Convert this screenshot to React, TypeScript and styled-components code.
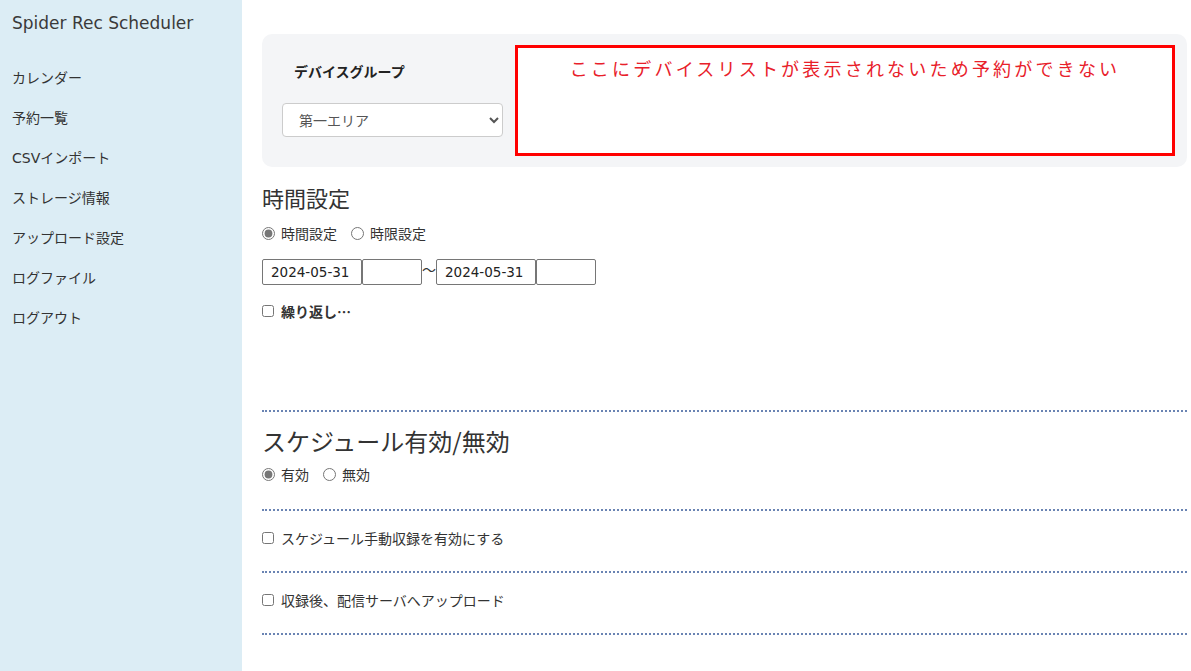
import React from "react";
import styled, { createGlobalStyle } from "styled-components";

const Global = createGlobalStyle`
  html, body { margin: 0; padding: 0; background: #fff; }
  body {
    font-family: "DejaVu Sans", "Noto Sans CJK JP", sans-serif;
    color: #333;
    font-size: 14px;
  }
  * { box-sizing: border-box; }
`;

const Layout = styled.div`
  display: flex;
  width: 1191px;
  min-height: 671px;
`;

const Sidebar = styled.aside`
  width: 242px;
  flex-shrink: 0;
  background: #dcedf5;
  padding: 10px 12px;
`;

const Brand = styled.div`
  font-size: 17px;
  color: #3a3a3a;
  line-height: 26px;
  margin-bottom: 22px;
`;

const NavList = styled.nav`
  display: flex;
  flex-direction: column;
`;

const NavItem = styled.a`
  display: block;
  font-size: 14px;
  line-height: 40px;
  color: #333;
  text-decoration: none;
`;

const Main = styled.main`
  flex: 1;
  padding: 34px 4px 0 20px;
`;

const Panel = styled.div`
  display: flex;
  background: #f4f5f7;
  border-radius: 10px;
  height: 133px;
  padding: 11px 12px 11px 20px;
  gap: 12px;
`;

const GroupCol = styled.div`
  display: flex;
  flex-direction: column;
  width: 221px;
  padding-top: 16px;
`;

const GroupLabel = styled.div`
  font-family: "Noto Sans CJK JP", sans-serif;
  font-weight: bold;
  font-size: 14px;
  line-height: 20px;
  padding-left: 12px;
  color: #222;
`;

const Select = styled.select`
  margin-top: 22px;
  height: 34px;
  width: 221px;
  border: 1px solid #ccc;
  border-radius: 4px;
  background: #fff;
  font-family: "Noto Sans CJK JP", sans-serif;
  font-size: 14px;
  color: #555;
  padding: 0 12px;
`;

const DeviceBox = styled.div`
  flex: 1;
  border: 3px solid #ff0000;
  background: #fff;
  text-align: center;
  color: #e8202a;
  font-family: "Noto Sans CJK JP", sans-serif;
  font-size: 18px;
  letter-spacing: 3.2px;
  line-height: 26px;
  padding-top: 7px;
`;

const Heading = styled.h2<{ $size: number }>`
  margin: 0;
  font-family: "Noto Sans CJK JP", sans-serif;
  font-weight: normal;
  font-size: ${(p) => p.$size}px;
  line-height: 32px;
  color: #333;
`;

const TimeSection = styled.section`
  padding-top: 14px;
  height: 243px;
`;

const RadioRow = styled.div<{ $top: number }>`
  display: flex;
  align-items: center;
  height: 24px;
  margin-top: ${(p) => p.$top}px;
  gap: 14px;
  font-size: 14px;
`;

const RadioLabel = styled.label`
  display: flex;
  align-items: center;
  gap: 6px;
  font-family: "Noto Sans CJK JP", sans-serif;
`;

const Radio = styled.input`
  margin: 0;
  width: 13px;
  height: 13px;
  accent-color: #777;
`;

const DateRow = styled.div`
  display: flex;
  align-items: center;
  margin-top: 14px;
`;

const TextBox = styled.input<{ $w: number }>`
  width: ${(p) => p.$w}px;
  height: 26px;
  border: 1px solid #767676;
  border-radius: 2px;
  font-family: "DejaVu Sans", sans-serif;
  font-size: 13.5px;
  padding: 0 8px;
  color: #222;
  margin: 0;
`;

const Tilde = styled.span`
  width: 14px;
  text-align: center;
  font-family: "Noto Sans CJK JP", sans-serif;
  font-size: 14px;
  margin-top: -6px;
`;

const CheckLabel = styled.label<{ $bold?: boolean }>`
  display: flex;
  align-items: center;
  gap: 7px;
  font-family: "Noto Sans CJK JP", sans-serif;
  font-size: 14px;
  font-weight: ${(p) => (p.$bold ? "bold" : "normal")};
`;

const Check = styled.input`
  margin: 0;
  width: 12px;
  height: 12px;
`;

const RepeatRow = styled.div`
  margin-top: 16px;
`;

const Divider = styled.div`
  border-top: 2px dotted #6a84b3;
`;

const ScheduleSection = styled.section`
  padding-top: 13px;
  height: 97px;
`;

const CheckSection = styled.section`
  height: 60px;
  display: flex;
  align-items: center;
  padding-bottom: 6px;
`;

export default function App() {
  return (
    <>
      <Global />
      <Layout>
        <Sidebar>
          <Brand>Spider Rec Scheduler</Brand>
          <NavList>
            {["カレンダー", "予約一覧", "CSVインポート", "ストレージ情報", "アップロード設定", "ログファイル", "ログアウト"].map((t) => (
              <NavItem key={t} href="#">{t}</NavItem>
            ))}
          </NavList>
        </Sidebar>
        <Main>
          <Panel>
            <GroupCol>
              <GroupLabel>デバイスグループ</GroupLabel>
              <Select defaultValue="1">
                <option value="1">第一エリア</option>
              </Select>
            </GroupCol>
            <DeviceBox>ここにデバイスリストが表示されないため予約ができない</DeviceBox>
          </Panel>
          <TimeSection>
            <Heading $size={22}>時間設定</Heading>
            <RadioRow $top={8}>
              <RadioLabel><Radio type="radio" name="t" defaultChecked />時間設定</RadioLabel>
              <RadioLabel><Radio type="radio" name="t" />時限設定</RadioLabel>
            </RadioRow>
            <DateRow>
              <TextBox $w={100} defaultValue="2024-05-31" />
              <TextBox $w={60} defaultValue="" />
              <Tilde>〜</Tilde>
              <TextBox $w={100} defaultValue="2024-05-31" />
              <TextBox $w={60} defaultValue="" />
            </DateRow>
            <RepeatRow>
              <CheckLabel $bold><Check type="checkbox" />繰り返し…</CheckLabel>
            </RepeatRow>
          </TimeSection>
          <Divider />
          <ScheduleSection>
            <Heading $size={24}>スケジュール有効/無効</Heading>
            <RadioRow $top={5}>
              <RadioLabel><Radio type="radio" name="e" defaultChecked />有効</RadioLabel>
              <RadioLabel><Radio type="radio" name="e" />無効</RadioLabel>
            </RadioRow>
          </ScheduleSection>
          <Divider />
          <CheckSection>
            <CheckLabel><Check type="checkbox" />スケジュール手動収録を有効にする</CheckLabel>
          </CheckSection>
          <Divider />
          <CheckSection>
            <CheckLabel><Check type="checkbox" />収録後、配信サーバへアップロード</CheckLabel>
          </CheckSection>
          <Divider />
        </Main>
      </Layout>
    </>
  );
}
